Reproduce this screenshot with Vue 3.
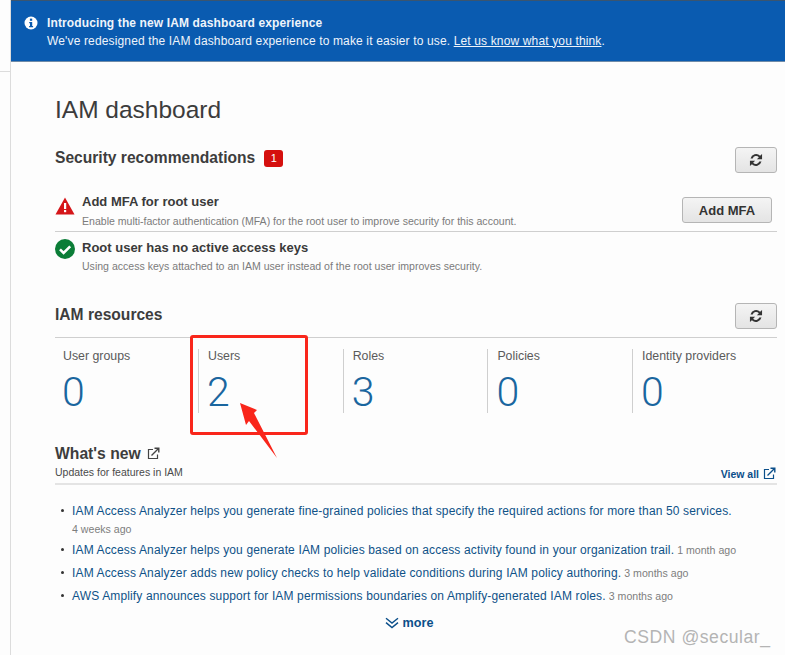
<script setup>
const resources = [
  { label: 'User groups', value: 0 },
  { label: 'Users', value: 2 },
  { label: 'Roles', value: 3 },
  { label: 'Policies', value: 0 },
  { label: 'Identity providers', value: 0 },
]
const news = [
  { text: 'IAM Access Analyzer helps you generate fine-grained policies that specify the required actions for more than 50 services.', age: '4 weeks ago', block: true },
  { text: 'IAM Access Analyzer helps you generate IAM policies based on access activity found in your organization trail.', age: '1 month ago' },
  { text: 'IAM Access Analyzer adds new policy checks to help validate conditions during IAM policy authoring.', age: '3 months ago' },
  { text: 'AWS Amplify announces support for IAM permissions boundaries on Amplify-generated IAM roles.', age: '3 months ago' },
]
</script>

<template>
  <div class="page">
    <aside class="side"><div class="side-top"></div></aside>
    <div class="content">
      <div class="banner">
        <svg class="info" viewBox="0 0 14 14" width="14" height="14">
          <circle cx="7" cy="7" r="6.5" fill="#fff" />
          <rect x="5.9" y="2.6" width="2.3" height="2.2" fill="#0a5bb0" />
          <path d="M5.2 5.9h3v4.1h.9v1.3H5.1V10h.9V7.2h-.8z" fill="#0a5bb0" />
        </svg>
        <div>
          <div class="banner-title">Introducing the new IAM dashboard experience</div>
          <div class="banner-text">We've redesigned the IAM dashboard experience to make it easier to use. <u>Let us know what you think</u>.</div>
        </div>
      </div>
      <main class="main">
        <h1>IAM dashboard</h1>

        <div class="head sec-head">
          <h2>Security recommendations</h2>
          <span class="badge">1</span>
          <button class="btn refresh top-refresh" aria-label="Refresh">
            <svg viewBox="0 0 14 14" width="16" height="16"><path d="M2.2 5.6A5 5 0 0 1 10.6 3.3L12.3 1.8V6.4H7.8L9.5 4.6A3.2 3.2 0 0 0 4.1 5.6ZM11.8 8.4A5 5 0 0 1 3.4 10.7L1.7 12.2V7.6H6.2L4.5 9.4A3.2 3.2 0 0 0 9.9 8.4Z" fill="#333"/></svg>
          </button>
        </div>

        <div class="rec rec-first">
          <svg class="rec-icon" viewBox="0 0 20 20" width="20" height="20">
            <path d="M10 1.5 19.5 18.5H.5Z" fill="#d5161a" />
            <rect x="9" y="7" width="2.2" height="6" fill="#fff" />
            <rect x="9" y="14" width="2.2" height="2.2" fill="#fff" />
          </svg>
          <div class="rec-body">
            <div class="rec-title">Add MFA for root user</div>
            <div class="rec-text">Enable multi-factor authentication (MFA) for the root user to improve security for this account.</div>
          </div>
          <button class="btn mfa">Add MFA</button>
        </div>
        <div class="rec rec-second">
          <svg class="rec-icon" viewBox="0 0 20 20" width="20" height="20">
            <circle cx="10" cy="10" r="10" fill="#0b7d37" />
            <path d="M5 10.4 8.6 14 15.2 7.4" fill="none" stroke="#fff" stroke-width="2.6" />
          </svg>
          <div class="rec-body">
            <div class="rec-title">Root user has no active access keys</div>
            <div class="rec-text">Using access keys attached to an IAM user instead of the root user improves security.</div>
          </div>
        </div>

        <div class="head res-head">
          <h2>IAM resources</h2>
          <button class="btn refresh low-refresh" aria-label="Refresh">
            <svg viewBox="0 0 14 14" width="16" height="16"><path d="M2.2 5.6A5 5 0 0 1 10.6 3.3L12.3 1.8V6.4H7.8L9.5 4.6A3.2 3.2 0 0 0 4.1 5.6ZM11.8 8.4A5 5 0 0 1 3.4 10.7L1.7 12.2V7.6H6.2L4.5 9.4A3.2 3.2 0 0 0 9.9 8.4Z" fill="#333"/></svg>
          </button>
        </div>
        <div class="resources">
          <div v-for="r in resources" :key="r.label" class="res">
            <div class="res-label">{{ r.label }}</div>
            <div class="res-value">{{ r.value }}</div>
          </div>
        </div>

        <div class="new-head">
          <div>
            <h2 class="new-title">What's new
              <svg viewBox="0 0 13 13" width="13" height="13"><path d="M6 2.5H1.5V11.5H10.5V7.5" fill="none" stroke="#444" stroke-width="1.2"/><path d="M4.5 8.5 11 2M7.5 1.2H11.8V5.5" fill="none" stroke="#444" stroke-width="1.4"/></svg>
            </h2>
            <div class="new-sub">Updates for features in IAM</div>
          </div>
          <a class="view-all">View all
            <svg viewBox="0 0 13 13" width="13" height="13"><path d="M6 2.5H1.5V11.5H10.5V7.5" fill="none" stroke="#0b4f8a" stroke-width="1.2"/><path d="M4.5 8.5 11 2M7.5 1.2H11.8V5.5" fill="none" stroke="#0b4f8a" stroke-width="1.4"/></svg>
          </a>
        </div>
        <ul class="news">
          <li v-for="n in news" :key="n.text" :class="{ tall: n.block }">
            <a>{{ n.text }}</a>
            <span class="age" :class="{ 'age-block': n.block }">{{ n.age }}</span>
          </li>
        </ul>
        <div class="more">
          <svg viewBox="0 0 14 12" width="14" height="12"><path d="M1 1.2 7 6 13 1.2M1 5.6 7 10.6 13 5.6" fill="none" stroke="#0b4f8a" stroke-width="1.4"/></svg>
          <span>more</span>
        </div>
      </main>
    </div>

    <div class="highlight"></div>
    <svg class="arrow" viewBox="0 0 50 65" width="50" height="65">
      <path d="M0 0 17 7 14 10 37 55 9 18 6 22Z" transform="translate(0 1)" fill="#f9261b" />
    </svg>
    <div class="mark">CSDN @secular_</div>
  </div>
</template>

<style>
html, body { margin: 0; background: #fff; overflow: hidden; }
</style>

<style scoped>
.page {
  position: relative;
  display: flex;
  width: 785px;
  height: 655px;
  overflow: hidden;
  font-family: "Liberation Sans", Arial, sans-serif;
  color: #3a3a3a;
  background: #fdfdfd;
}
.side {
  width: 10px;
  flex: none;
  border-right: 1px solid #dcdcdc;
}
.side-top { height: 71px; border-bottom: 1px solid #dcdcdc; }
.content { flex: 1; min-width: 0; }
.banner {
  display: flex;
  gap: 9px;
  height: 62px;
  box-sizing: border-box;
  padding: 15px 0 0 13px;
  background: #0a5bb0;
  border-bottom: 1px solid #6f8ba8;
  box-shadow: inset 0 1px 0 #3a5570;
  color: #fff;
  font-size: 12px;
  line-height: 17.5px;
}
.info { margin-top: 1px; flex: none; }
.banner-title { font-weight: 700; letter-spacing: .01em; color: #eef4fb; }
.banner-text { color: #eef4fb; letter-spacing: .012em; }
.main { padding: 0 8px 0 44px; }
h1 {
  margin: 32px 0 0;
  font-size: 24.5px;
  line-height: 32px;
  font-weight: 400;
  color: #3c3c3c;
}
h2 { margin: 0; font-size: 15.6px; line-height: 20px; font-weight: 700; color: #3d3d3d; }
.head { display: flex; align-items: center; }
.sec-head { margin-top: 21px; height: 28px; }
.sec-head h2 { margin-top: -6px; }
.badge {
  margin: -5px 0 0 9px;
  width: 19px;
  height: 17px;
  border-radius: 3px;
  background: #d5100e;
  color: #fff;
  font-size: 11px;
  line-height: 17px;
  text-align: center;
}
.btn {
  box-sizing: border-box;
  border: 1px solid #b5b5b5;
  border-radius: 3px;
  background: linear-gradient(#f4f4f4, #e4e4e4);
  color: #333;
  font-family: inherit;
  padding: 0;
}
.refresh {
  margin-left: auto;
  width: 42px;
  height: 26px;
  display: flex;
  align-items: center;
  justify-content: center;
}
.top-refresh { margin-top: -3px; }
.low-refresh { margin-top: 2px; }
.mfa {
  flex: none;
  width: 90px;
  height: 26px;
  margin: -1px 5px 0 0;
  font-size: 13px;
  font-weight: 700;
}
.rec { display: flex; align-items: center; }
.rec-first { margin-top: 15px; height: 41px; border-bottom: 1px solid #cfcfcf; }
.rec-second { height: 37px; align-items: flex-start; padding-top: 8px; }
.rec-second .rec-text { margin-top: 3px; }
.rec-icon { flex: none; margin: 0 7px 0 0; }
.rec-first .rec-icon { margin-top: -10px; }
.rec-second .rec-icon { margin-top: -1px; }
.rec-body { flex: 1; }
.rec-title { font-size: 13px; line-height: 16px; font-weight: 700; color: #3a3a3a; }
.rec-text { margin-top: 4px; font-size: 10.55px; line-height: 14px; color: #7b7b7b; }
.res-head { margin-top: 24px; height: 27px; }
.resources {
  display: flex;
  margin-top: 9px;
  width: 722px;
  border-top: 1px solid #cfcfcf;
  padding-top: 11px;
}
.res {
  flex: 0 0 144.7px;
  box-sizing: border-box;
  height: 64px;
  padding-left: 9px;
  border-left: 1px solid #cfcfcf;
}
.res:first-child { flex-basis: 143px; padding-left: 8px; border-left: 0; }
.res-label { font-size: 12.35px; line-height: 14px; color: #5a5a5a; }
.res-value {
  margin: 7px 0 0 -1px;
  font-family: Roboto, "Liberation Sans", sans-serif;
  font-size: 41px;
  line-height: 44px;
  color: #1a669f;
  font-weight: 300;
}
.new-head {
  display: flex;
  justify-content: space-between;
  align-items: flex-end;
  margin-top: 31px;
  width: 722px;
  padding-bottom: 3px;
  border-bottom: 2px solid #e4e4e4;
}
.new-title { font-size: 15.7px; line-height: 20px; }
.new-title svg { margin-left: 2px; vertical-align: -1px; }
.new-sub { font-size: 10.5px; line-height: 16px; color: #4a4a4a; }
.view-all {
  display: flex;
  align-items: center;
  gap: 4px;
  margin-left: auto;
  transform: translateX(-1px);
  font-size: 10.5px;
  font-weight: 700;
  color: #0b4f8a;
}
.news {
  list-style: none;
  margin: 17px 0 0;
  padding: 0 0 0 17px;
  width: 720px;
  font-size: 12px;
}
.news li { position: relative; height: 23px; line-height: 18px; white-space: nowrap; }
.news li.tall { height: 39px; }
.news li::before {
  content: "";
  position: absolute;
  left: -11px;
  top: 7px;
  width: 3px;
  height: 3px;
  border-radius: 50%;
  background: #333;
}
.news a { color: #0f5288; letter-spacing: .012em; }
.age { margin-left: 3px; font-size: 10.6px; color: #7d7d7d; }
.age-block { display: block; margin: 0; line-height: 18px; }
.more {
  display: flex;
  justify-content: center;
  align-items: center;
  gap: 4px;
  margin: 6px 0 0 0;
  width: 708px;
  font-size: 12.6px;
  font-weight: 700;
  color: #0b4f8a;
}
.highlight {
  position: absolute;
  left: 190px;
  top: 335px;
  width: 118px;
  height: 100px;
  box-sizing: border-box;
  border: 3px solid #f9261b;
  border-radius: 3px;
}
.arrow { position: absolute; left: 240px; top: 402px; }
.mark {
  position: absolute;
  left: 624px;
  top: 627px;
  font-size: 17.6px;
  line-height: 20px;
  color: #b4b4b4;
  letter-spacing: .03em;
}
</style>
